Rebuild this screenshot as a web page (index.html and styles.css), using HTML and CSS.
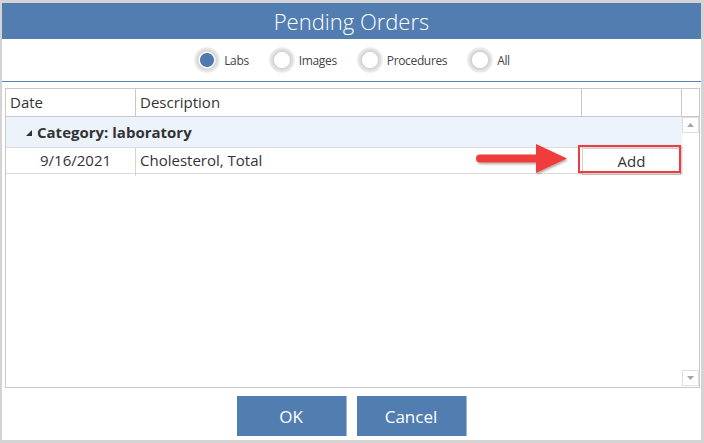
FILE: index.html
```html
<!DOCTYPE html>
<html lang="en">
<head>
<meta charset="utf-8">
<title>Pending Orders</title>
<link rel="stylesheet" href="styles.css">
</head>
<body>
<div class="window">
  <header class="title">Pending Orders</header>
  <div class="filters">
    <label class="opt"><span class="radio checked"></span><span class="opt-label">Labs</span></label>
    <label class="opt"><span class="radio"></span><span class="opt-label">Images</span></label>
    <label class="opt"><span class="radio"></span><span class="opt-label">Procedures</span></label>
    <label class="opt"><span class="radio"></span><span class="opt-label">All</span></label>
  </div>
  <div class="grid">
    <div class="grid-head">
      <div class="hc">Date</div>
      <div class="hc">Description</div>
      <div class="hc"></div>
      <div class="hc hc-last"></div>
    </div>
    <div class="grid-body">
      <div class="rows">
        <div class="group-row">
          <svg class="caret" width="6" height="6" viewBox="0 0 6 6"><polygon points="6,0 6,6 0,6" fill="#333"/></svg>
          <span>Category: laboratory</span>
        </div>
        <div class="row">
          <div class="cell cell-date">9/16/2021</div>
          <div class="cell cell-desc">Cholesterol, Total</div>
          <div class="cell cell-act"><button class="add-btn">Add</button></div>
        </div>
      </div>
      <div class="vscroll">
        <div class="sbtn"><svg width="7" height="4" viewBox="0 0 7 4"><polygon points="0,4 3.5,0 7,4" fill="#a6a6a6"/></svg></div>
        <div class="sbtn"><svg width="7" height="4" viewBox="0 0 7 4"><polygon points="0,0 7,0 3.5,4" fill="#a6a6a6"/></svg></div>
      </div>
    </div>
    <svg class="callout-arrow" width="104" height="40" viewBox="0 0 104 40">
      <defs>
        <filter id="sh" x="-10%" y="-20%" width="130%" height="150%">
          <feDropShadow dx="1" dy="1.5" stdDeviation="1.2" flood-color="#000" flood-opacity="0.35"/>
        </filter>
      </defs>
      <g filter="url(#sh)" fill="#ef3e3e">
        <line x1="10" y1="20.5" x2="70" y2="20.5" stroke="#ef3e3e" stroke-width="8" stroke-linecap="round"/>
        <polygon points="66,6 97,20.5 66,35"/>
      </g>
    </svg>
    <div class="callout-box"></div>
  </div>
  <div class="actions">
    <button class="btn">OK</button>
    <button class="btn">Cancel</button>
  </div>
</div>
</body>
</html>
```
FILE: styles.css
```css
html, body {
  margin: 0;
  padding: 0;
}
body {
  background: #d4d4d4;
  width: 704px;
  height: 443px;
  overflow: hidden;
  font-family: "Open Sans", "Noto Sans", sans-serif;
  color: #333;
}
.window {
  margin: 3px 3px 3px 2px;
  width: 699px;
  height: 437px;
  background: #fff;
  display: flex;
  flex-direction: column;
}
.title {
  height: 36px;
  background: #527db1;
  color: #fff;
  text-align: center;
  font-size: 22px;
  font-weight: 300;
  line-height: 37px;
}
.filters {
  height: 42px;
  border-bottom: 1px solid #5a83b6;
  display: flex;
  justify-content: center;
  align-items: center;
  gap: 20px;
  padding-left: 1px;
}
.opt {
  display: flex;
  align-items: center;
  gap: 4px;
  font-size: 12px;
  letter-spacing: -0.35px;
  color: #444;
}
.radio {
  width: 26px;
  height: 26px;
  border-radius: 50%;
  background: radial-gradient(circle at 50% 50%, #fff 0 7.5px, #d2d2d2 8.5px, #e4e4e4 11px, #f2f2f2 13px);
}
.radio.checked {
  background: radial-gradient(circle at 50% 50%, #4f79b0 0 6.5px, #fff 7.5px, #fff 8px, #d2d2d2 9px, #e4e4e4 11px, #f2f2f2 13px);
}
.grid {
  position: relative;
  margin: 6px 1px 0 3px;
  height: 300px;
  box-sizing: border-box;
  border: 1px solid #c9c9c9;
  display: flex;
  flex-direction: column;
  font-size: 15px;
}
.grid-head {
  display: grid;
  grid-template-columns: 130px 446px 100px 17px;
  height: 28px;
  box-sizing: border-box;
  border-bottom: 1px solid #c9c9c9;
}
.hc {
  border-right: 1px solid #c9c9c9;
  padding-left: 4px;
  line-height: 27px;
  color: #333;
}
.hc-last {
  border-right: none;
}
.grid-body {
  flex: 1;
  display: flex;
}
.rows {
  width: 676px;
}
.group-row {
  height: 31px;
  box-sizing: border-box;
  background: #ecf3fb;
  border-bottom: 1px solid #dcdcdc;
  display: flex;
  align-items: center;
  padding-left: 20px;
  font-weight: 700;
  line-height: 30px;
}
.caret {
  margin-right: 5px;
  margin-top: 1px;
}
.row {
  display: grid;
  grid-template-columns: 130px 446px 100px;
  height: 26px;
  box-sizing: border-box;
  border-bottom: 1px solid #dcdcdc;
}
.cell {
  line-height: 25px;
  white-space: nowrap;
}
.cell-date {
  border-right: 1px solid #d4d4d4;
  padding-left: 34px;
}
.cell-desc {
  padding-left: 4px;
}
.cell-act {
  display: flex;
}
.add-btn {
  flex: 1;
  margin: 0 1px 1px 0;
  border: 1px solid #cfcfcf;
  background: #fff;
  font: inherit;
  color: #333;
  padding: 0;
}
.vscroll {
  width: 17px;
  display: flex;
  flex-direction: column;
  justify-content: space-between;
  padding-bottom: 1px;
  box-sizing: border-box;
}
.sbtn {
  width: 15px;
  height: 14px;
  border: 1px solid #dedede;
  background: #fff;
  display: flex;
  align-items: center;
  justify-content: center;
}
.callout-box {
  position: absolute;
  left: 572px;
  top: 56px;
  width: 103px;
  height: 28px;
  box-sizing: border-box;
  border: 2px solid #f03c3c;
  box-shadow: 1px 1px 2px rgba(0, 0, 0, 0.25);
}
.callout-arrow {
  position: absolute;
  left: 464px;
  top: 49px;
}
.actions {
  display: flex;
  justify-content: center;
  gap: 10px;
  margin-top: 8px;
}
.btn {
  width: 110px;
  height: 40px;
  border: none;
  border-right: 1px solid #9db6d4;
  background: #527db1;
  color: #fff;
  font-family: "Open Sans", "Noto Sans", sans-serif;
  font-size: 17px;
  padding: 0;
}
```
